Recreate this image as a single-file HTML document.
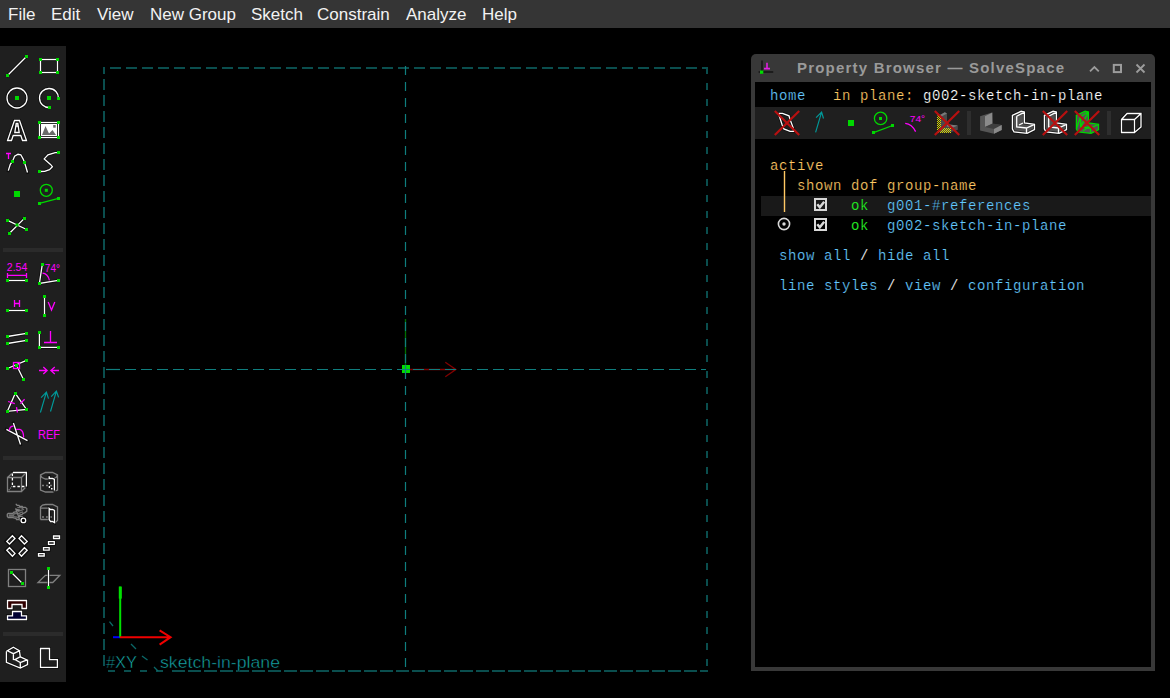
<!DOCTYPE html>
<html><head><meta charset="utf-8">
<style>
html,body{margin:0;padding:0;background:#000;width:1170px;height:698px;overflow:hidden;position:relative;font-family:"Liberation Sans",sans-serif;}
#menubar{position:absolute;left:0;top:0;width:1170px;height:28px;background:#353535;}
#menubar span{position:absolute;top:5px;font-size:17px;line-height:20px;color:#f2f2f2;white-space:nowrap;}
#win{position:absolute;left:751px;top:54px;width:404px;height:617px;background:#383838;border-radius:5px 5px 0 0;}
#title{position:absolute;left:797px;top:58px;font-weight:bold;font-size:15px;letter-spacing:1.2px;color:#9a9a9a;white-space:nowrap;line-height:20px;}
#tw{position:absolute;left:755px;top:82px;width:396px;height:585px;background:#000;}
#strip{position:absolute;left:755px;top:107px;width:396px;height:32px;background:#1f1f1f;}
#hl{position:absolute;left:761px;top:196px;width:390px;height:20px;background:#191919;}
.t{position:absolute;font-family:"Liberation Mono",monospace;font-size:14px;letter-spacing:0.6px;line-height:20px;white-space:pre;-webkit-text-stroke:0.2px #000;}
</style></head><body>
<div id="menubar">
<span style="left:8px">File</span>
<span style="left:51px">Edit</span>
<span style="left:97px">View</span>
<span style="left:150px">New Group</span>
<span style="left:251px">Sketch</span>
<span style="left:317px">Constrain</span>
<span style="left:406px">Analyze</span>
<span style="left:482px">Help</span>
</div>
<svg id="tbsvg" width="66" height="698" style="position:absolute;left:0;top:0">
<defs>
<style>
.h{fill:none;stroke:#000;stroke-width:3;stroke-linecap:square;opacity:.55}
.w{fill:none;stroke:#fff;stroke-width:1.3}
.m{fill:none;stroke:#ff00ff;stroke-width:1.3}
.gy{fill:none;stroke:#808080;stroke-width:1.3}
.tl{fill:none;stroke:#009a9a;stroke-width:1.15}
.gl{fill:none;stroke:#00d800;stroke-width:1.3}
.p{fill:#00d800}
</style>
</defs>
<rect x="0" y="46" width="66" height="636" fill="#1f1f1f"/>
<rect x="3" y="248" width="60" height="4" fill="#2b2b2b"/>
<rect x="3" y="456" width="60" height="4" fill="#2b2b2b"/>
<rect x="3" y="632" width="60" height="4" fill="#2b2b2b"/>

<!-- row1: line, rect -->
<g transform="translate(5,54)">
 <path class="h" d="M2.5 21.5L21.5 2.5"/><path class="w" d="M2.5 21.5L21.5 2.5"/>
 <rect class="p" x="1" y="20" width="3" height="3"/><rect class="p" x="20" y="1" width="3" height="3"/>
</g>
<g transform="translate(37,54)">
 <rect class="h" x="3.5" y="5.5" width="17" height="13"/><rect class="w" x="3.5" y="5.5" width="17" height="13"/>
 <rect class="p" x="2" y="4" width="3" height="3"/><rect class="p" x="19" y="4" width="3" height="3"/>
 <rect class="p" x="2" y="17" width="3" height="3"/><rect class="p" x="19" y="17" width="3" height="3"/>
</g>
<!-- row2: circle, arc -->
<g transform="translate(5,86)">
 <circle class="h" cx="12" cy="12" r="10"/><circle class="w" cx="12" cy="12" r="10"/>
 <rect class="p" x="10" y="10" width="4" height="4"/>
</g>
<g transform="translate(37,86)">
 <path class="h" d="M21.5 12.5A9.5 9.5 0 1 0 12.5 21.5"/><path class="w" d="M21.5 12.5A9.5 9.5 0 1 0 12.5 21.5"/>
 <rect class="p" x="10" y="10" width="4" height="4"/>
 <rect class="p" x="20" y="11" width="3" height="3"/><rect class="p" x="11" y="20" width="3" height="3"/>
</g>
<!-- row3: text A, image -->
<g transform="translate(5,118)">
 <path class="h" d="M9.5 2.5H14.5L21.5 22.5H17.5L15.8 17.5H8.2L6.5 22.5H2.5Z M9.8 14.5H14.2L12.8 5.5H11.2Z"/>
 <path class="w" d="M9.5 2.5H14.5L21.5 22.5H17.5L15.8 17.5H8.2L6.5 22.5H2.5Z M9.8 14.5H14.2L12.8 5.5H11.2Z"/>
 <rect fill="#fff" x="11.3" y="6.3" width="1.4" height="2.8"/>
</g>
<g transform="translate(37,118)">
 <rect x="1" y="3" width="22" height="18" fill="#000" opacity=".6"/>
 <rect class="w" x="2.5" y="4.5" width="19" height="15"/>
 <rect x="4" y="6" width="16" height="12" fill="#fff"/>
 <path d="M5 17L8.5 8L12 15.5L15.5 12L19 17Z" fill="#6a6a6a"/>
 <rect x="16.2" y="7" width="2.5" height="2.7" fill="#6a6a6a"/>
 <rect class="p" x="1" y="3" width="3" height="3"/><rect class="p" x="20" y="3" width="3" height="3"/>
 <rect class="p" x="1" y="18" width="3" height="3"/><rect class="p" x="20" y="18" width="3" height="3"/>
</g>
<!-- row4: tangent arc, bezier -->
<g transform="translate(5,150)">
 <path class="m" d="M1 3.5H6M3.5 3.5V9"/>
 <path class="h" d="M3.3 20.6L5.3 14.4L7.4 11.5L9.6 6.2L13 4.3L15.8 4.8L18.2 9.1L19.5 12.4L21 17.2L22.5 22.5"/>
 <path class="w" d="M3.3 20.6L5.3 14.4L7.4 11.5L9.6 6.2L13 4.3L15.8 4.8L18.2 9.1L19.5 12.4L21 17.2L22.5 22.5"/>
 <rect class="p" x="6" y="10" width="3" height="3"/><rect class="p" x="18" y="11" width="3" height="3"/>
</g>
<g transform="translate(37,150)">
 <path class="h" d="M2.4 21.5L7.7 21.3L12.5 19.6L15.4 16.7L13.5 14.4L7.2 8.9L11 4.8L18.2 2.6L21.3 2.6"/>
 <path class="w" d="M2.4 21.5L7.7 21.3L12.5 19.6L15.4 16.7L13.5 14.4L7.2 8.9L11 4.8L18.2 2.6L21.3 2.6"/>
 <rect class="p" x="1" y="20" width="3" height="3"/><rect class="p" x="20" y="1" width="3" height="3"/>
</g>
<!-- row5: point, workplane construction -->
<g transform="translate(5,182)">
 <rect class="p" x="9" y="9" width="6" height="6"/>
</g>
<g transform="translate(37,182)">
 <circle class="gl" cx="9.3" cy="8.3" r="6"/>
 <rect class="p" x="7.8" y="6.8" width="3" height="3"/>
 <path class="gl" d="M2.4 21.4L21.5 16.4"/>
 <rect class="p" x="1" y="20" width="3" height="3"/><rect class="p" x="20" y="15" width="3" height="3"/>
</g>
<!-- row6: split -->
<g transform="translate(5,214)">
 <path class="h" d="M2.5 6.4L21.6 15.5M19.4 4.4L4.3 19.5"/>
 <path class="w" d="M2.5 6.4L21.6 15.5M19.4 4.4L4.3 19.5"/>
 <rect class="p" x="1" y="5" width="3" height="3"/><rect class="p" x="18" y="3" width="3" height="3"/>
 <rect class="p" x="20" y="14" width="3" height="3"/><rect class="p" x="3" y="18" width="3" height="3"/>
 <rect class="p" x="10.5" y="9.5" width="3" height="3"/>
</g>
<!-- row7: distance, angle -->
<g transform="translate(5,262)">
 <text x="1.8" y="9.2" font-family="Liberation Sans" font-size="10" fill="#ff00ff" textLength="20.5" lengthAdjust="spacingAndGlyphs">2.54</text>
 <path class="m" d="M2.5 11V16M21.5 11V16M2.5 13.4H21.5"/>
 <path class="h" d="M2.5 18.5H21.5"/><path class="w" d="M2.5 18.5H21.5"/>
 <rect class="p" x="1" y="17" width="3" height="3"/><rect class="p" x="20" y="17" width="3" height="3"/>
</g>
<g transform="translate(37,262)">
 <text x="7.8" y="10" font-family="Liberation Sans" font-size="10" fill="#ff00ff" textLength="15.2" lengthAdjust="spacingAndGlyphs">74°</text>
 <path class="m" d="M5.3 11.2Q11 11.5 12.5 18.7"/>
 <path class="h" d="M5.3 2.4L2.4 21.5L21.3 18.4"/><path class="w" d="M5.3 2.4L2.4 21.5L21.3 18.4"/>
 <rect class="p" x="4" y="1" width="3" height="3"/><rect class="p" x="1" y="20" width="3" height="3"/><rect class="p" x="20" y="17" width="3" height="3"/>
</g>
<!-- row8: H, V -->
<g transform="translate(5,294)">
 <path class="m" d="M9.5 6V13M14.5 6V13M9.5 9.5H14.5"/>
 <path class="h" d="M2.5 16.5H21.5"/><path class="w" d="M2.5 16.5H21.5"/>
 <rect class="p" x="1" y="15" width="3" height="3"/><rect class="p" x="20" y="15" width="3" height="3"/>
</g>
<g transform="translate(37,294)">
 <path class="m" d="M11.2 8L14.5 16L17.8 8"/>
 <path class="h" d="M7.5 2.4V21.5"/><path class="w" d="M7.5 2.4V21.5"/>
 <rect class="p" x="6" y="1" width="3" height="3"/><rect class="p" x="6" y="20" width="3" height="3"/>
</g>
<!-- row9: parallel, perpendicular -->
<g transform="translate(5,326)">
 <path class="h" d="M2.4 10.5L21.5 7.4M2.4 17.5L21.5 14.4"/><path class="w" d="M2.4 10.5L21.5 7.4M2.4 17.5L21.5 14.4"/>
 <rect class="p" x="1" y="9" width="3" height="3"/><rect class="p" x="20" y="6" width="3" height="3"/>
 <rect class="p" x="1" y="16" width="3" height="3"/><rect class="p" x="20" y="13" width="3" height="3"/>
</g>
<g transform="translate(37,326)">
 <path class="m" d="M13.5 5V16.5M7 16.5H20"/>
 <path class="h" d="M2.4 6.5V21.4H21.3"/><path class="w" d="M2.4 6.5V21.4H21.3"/>
 <rect class="p" x="1" y="5" width="3" height="3"/><rect class="p" x="1" y="20" width="3" height="3"/><rect class="p" x="20" y="20" width="3" height="3"/>
</g>
<!-- row10: point on line, coincident arrows -->
<g transform="translate(5,358)">
 <path class="h" d="M2.4 10.5L21.5 2.4M11.5 7.2L18.4 21.3"/><path class="w" d="M2.4 10.5L21.5 2.4M11.5 7.2L18.4 21.3"/>
 <rect class="m" x="8.5" y="4.5" width="6" height="6"/>
 <rect class="p" x="1" y="9" width="3" height="3"/><rect class="p" x="20" y="1" width="3" height="3"/>
 <rect class="p" x="10" y="6" width="3" height="3"/><rect class="p" x="17" y="20" width="3" height="3"/>
</g>
<g transform="translate(37,358)">
 <path class="m" d="M2 12.5H10.1M6.3 9.1L10.1 12.5L6.3 15.9M22 12.5H13.9M17.8 9.1L13.9 12.5L17.8 15.9"/>
</g>
<!-- row11: equal triangle, parallel arrows (same orientation) -->
<g transform="translate(5,390)">
 <path class="h" d="M10.3 3.3L2.4 21.3L21.5 19.4Z"/><path class="w" d="M10.3 3.3L2.4 21.3L21.5 19.4Z"/>
 <path class="m" d="M3.1 11.5L9.8 13.6M15.3 13.6L19.6 9.3M11.5 17.2L12.4 22.5"/>
 <rect class="p" x="9" y="2" width="3" height="3"/><rect class="p" x="1" y="20" width="3" height="3"/><rect class="p" x="20" y="18" width="3" height="3"/>
</g>
<g transform="translate(37,390)">
 <path class="tl" d="M3.4 22.5L9.4 2.2M4.1 7.7L9.4 2.2L11.5 8.6M13.5 21.5L19.4 1.2M14.2 6.7L19.4 1.2L21.6 7.4"/>
</g>
<!-- row12: angle cross, REF -->
<g transform="translate(5,422)">
 <path class="h" d="M1.4 7.4L22.5 18.6M8.4 1L15.5 22.5"/><path class="w" d="M1.4 7.4L22.5 18.6M8.4 1L15.5 22.5"/>
 <path class="m" d="M4.5 8.6Q4.3 4.1 8.6 4.1M11 7.4H14.8Q18.6 8.5 18.6 15.5"/>
</g>
<g transform="translate(37,422)">
 <text x="1" y="16.7" font-family="Liberation Sans" font-size="12" fill="#ff00ff" textLength="22" lengthAdjust="spacingAndGlyphs">REF</text>
</g>
<!-- row13: extrude, lathe -->
<g transform="translate(5,470)">
 <path class="gy" d="M2.5 7.5H16.5V21.5H2.5Z M2.5 7.5L7.9 2.5M16.5 7.5L21.4 2.5M16.5 21.5L21.4 16.5"/>
 <path class="gy" stroke-dasharray="1 1" d="M2.5 21.5L7.4 16"/>
 <path class="h" d="M7.9 2.5H21.4V16.5"/><path class="w" d="M7.9 2.5H21.4V16.5"/>
 <path class="w" stroke-dasharray="2.5 2" d="M7.4 3.5V16.5H21"/>
</g>
<g transform="translate(37,470)">
 <path class="gy" d="M8.5 2.5H15.5L20.5 5V20L15.5 22H8.5L3.5 20V5Z M3.5 5L5 7.5L8.5 9H15.5L19 7.5L20.5 5"/>
 <path class="gy" stroke-dasharray="2 2" d="M5 15.5H16"/>
 <path class="h" d="M12.2 6.2V8.3H15.5L17.4 9.3V20.6"/><path class="w" d="M12.2 6.2V8.3H15.5L17.4 9.3V20.6"/>
 <path class="w" stroke-dasharray="2 2" d="M12.4 12V18"/>
 <rect fill="#fff" x="14" y="18" width="1.5" height="1.5"/>
</g>
<!-- row14: helix, revolve -->
<g transform="translate(5,502)">
 <path class="gy" stroke-width="1.1" d="M10.6 2.3H11.5L12 3.4H14L14.6 4.3H17.2L17.8 5.3H20.3L21.8 6.6V9.2L20 10.6L18 11.5L17.2 12.3L14.6 13.2L14.9 14.3H17.2L18 15.5 M15 18.3L14 17.5H11.5L10.9 16.3L8.6 15.8L8 15.5H3.2L2.3 14.3V12.3L3.2 11.3H8L8.6 10.3L11.5 9.7L12 8.6H14L14.3 7.9L11.5 7.4L10.6 6.6Z"/>
 <path class="gy" stroke-width="1" opacity=".8" d="M12.3 5.7H16.6L18.3 7.4L16 8.3L12.9 9.5 M3.7 12.9H8.6L9.5 11.7L14 11.5L15.5 10.6L18 10 M3.7 14H8.6L9.2 14.6L12 15.2L14 15.8"/>
 <circle class="h" cx="18.4" cy="18.4" r="2.3"/><circle fill="#000" cx="18.4" cy="18.4" r="2"/><circle class="w" cx="18.4" cy="18.4" r="2.3" stroke-width="1.6"/>
</g>
<g transform="translate(37,502)">
 <path class="gy" d="M3.5 17.5V5L5.5 3L8.5 2.5H15.5L20.5 5V18.5L17.5 21M3.5 17.5H12.2M3.5 6.2H12.2"/>
 <path class="gy" stroke-dasharray="2 2" d="M5 15H16"/>
 <path class="h" d="M12.2 6.4L13.5 7.5H15.5L17.5 8.5V20.6L15.5 19.5H13.5L12.2 17.5Z"/>
 <path class="w" d="M12.2 6.4L13.5 7.5H15.5L17.5 8.5V20.6L15.5 19.5H13.5L12.2 17.5Z"/>
</g>
<!-- row15: step rotate, step translate -->
<g transform="translate(5,534)">
 <path class="h" d="M1 7.4L7.4 1L10.8 4.5L4.5 10.8Z M13.2 4.5L16.5 1L23 7.4L19.4 10.8Z M1 16.3L4.5 12.9L10.8 19.4L7.4 23Z M13.2 19.4L19.4 12.9L23 16.3L16.5 23Z"/>
 <path class="w" stroke-width="1.5" d="M1.8 7.4L7.4 1.8L10 4.5L4.5 10Z M14 4.5L16.5 1.8L22.2 7.4L19.4 10Z M1.8 16.3L4.5 13.7L10 19.4L7.4 22.2Z M14 19.4L19.4 13.7L22.2 16.3L16.5 22.2Z"/>
</g>
<g transform="translate(37,534)">
 <path class="h" d="M16.5 2H22.5V4.5H16.5Z M11.5 7.7H17.3V10.3H11.5Z M6.5 13.7H12.2V16.2H6.5Z M1.5 19.6H7.2V22H1.5Z"/>
 <path class="w" stroke-width="1.5" d="M16.5 2H22.5V4.5H16.5Z M11.5 7.7H17.3V10.3H11.5Z M6.5 13.7H12.2V16.2H6.5Z M1.5 19.6H7.2V22H1.5Z"/>
</g>
<!-- row16: workplane, normal through workplane -->
<g transform="translate(5,566)">
 <rect class="gy" x="3.5" y="3.5" width="17" height="17"/>
 <path class="h" d="M6.5 6.5L17.5 17.5"/><path class="w" d="M6.5 6.5L17.5 17.5"/>
 <rect class="p" x="5" y="5" width="3" height="3"/><rect class="p" x="16" y="16" width="3" height="3"/>
</g>
<g transform="translate(37,566)">
 <path class="gy" d="M1 16.5H15.8L22.8 9.3H8.4Z"/>
 <path class="h" d="M11.5 2.4V21.5"/><path class="w" d="M11.5 2.4V21.5"/>
 <rect class="p" x="10" y="1" width="3" height="3"/><rect class="p" x="10" y="20" width="3" height="3"/>
</g>
<!-- row17: assemble -->
<g transform="translate(5,598)">
 <path d="M2.5 2.5H21.5V10.5H17V6.5H7V10.5H2.5Z" fill="#300000" stroke="#000" stroke-width="3" opacity=".6"/>
 <path d="M2.5 2.5H21.5V10.5H17V6.5H7V10.5H2.5Z" fill="#300000" stroke="#fff" stroke-width="1.3"/>
 <path d="M7.5 13.5H16.5V17.8H21.5V21.5H2.5V17.8H7.5Z" fill="#000" stroke="#000" stroke-width="3" opacity=".6"/>
 <path d="M7.5 13.5H16.5V17.8H21.5V21.5H2.5V17.8H7.5Z" fill="#000033" stroke="#fff" stroke-width="1.3"/>
</g>
<!-- row18: solid model L, sketch L -->
<g transform="translate(5,646)">
 <path class="h" d="M8.4 1.2L14.4 4.8L15.3 10.8L22 13.9V18.7L15.3 22L1.4 16.3V5.3Z"/>
 <path class="w" d="M8.4 1.2L14.4 4.8L8.4 7.7L2.4 4.8Z M1.4 5.3V16.3L15.3 22L22.5 18.7V13.9 M15.3 10.8L22 13.9L15.3 16.5L10 13.6Z M8.4 7.7V13.4L10 13.6 M14.4 4.8L15.3 10.8 M15.3 16.5V22"/>
</g>
<g transform="translate(37,646)">
 <path class="h" d="M3.5 2.5H12.5V13.6H20.4V21.3H3.5Z"/><path class="w" d="M3.5 2.5H12.5V13.6H20.4V21.3H3.5Z"/>
</g>
</svg>
<svg id="cv" width="1170" height="698" style="position:absolute;left:0;top:0">
 <!-- workplane border -->
 <g fill="none" stroke="#0a4e4e" stroke-width="2">
  <path d="M110 68H708" stroke-dasharray="11 5"/>
  <path d="M104 67V74"/><path d="M104 79V671" stroke-dasharray="11 5"/>
  <path d="M707 67V671" stroke-dasharray="7 9"/>
  <path d="M108 671H172" stroke-dasharray="7 9"/><path d="M172 671H708" stroke-dasharray="13 3"/>
 </g>
 <!-- under-lines: green normal & red axis -->
 <path d="M405.5 319V365" stroke="#007000" stroke-width="1.3"/>
 <path d="M410 369.5H455.5M445.3 362.2L455.8 369.5L445.3 376.8" fill="none" stroke="#800000" stroke-width="1.4"/>
 <!-- center dashed cross -->
 <g fill="none" stroke="#0f7e7e" stroke-width="1.2">
  <path d="M106 369.5H120"/><path d="M125 369.5H706" stroke-dasharray="11 5"/>
  <path d="M405.5 66V671" stroke-dasharray="9 7"/>
 </g>
 <rect x="402" y="365" width="8" height="8" fill="#00dd00"/>
 <path d="M405.5 365V373M402 369.5H410" stroke="#0f7e7e" stroke-width="1.2"/>
 <!-- axes -->
 <path d="M113 637.2H120" stroke="#0000ff" stroke-width="2"/>
 <path d="M120.2 586.6V637.5" stroke="#00e000" stroke-width="2"/>
 <rect x="118.8" y="586.6" width="3" height="12" fill="#00e000"/>
 <path d="M120 637.2H170M159.6 630.3L170.6 637.2L159.6 644.7" fill="none" stroke="#f00000" stroke-width="2"/>
 <!-- ticks -->
 <path d="M109.5 621.7L113 626M131 644L136 649M142 656L147.5 660M154 667L158 671" stroke="#0a6868" stroke-width="1.3"/>
 <text x="106" y="667.7" font-family="Liberation Sans" font-size="16" fill="#16acac" stroke="#000" stroke-width="0.45" textLength="31" lengthAdjust="spacingAndGlyphs">#XY</text>
 <text x="160" y="667.7" font-family="Liberation Sans" font-size="16" fill="#16acac" stroke="#000" stroke-width="0.45" textLength="120" lengthAdjust="spacingAndGlyphs">sketch-in-plane</text>
</svg>
<div id="win"></div>
<div id="title">Property Browser — SolveSpace</div>
<div id="tw"></div>
<div id="strip"></div>
<div id="hl"></div>
<div class="t" style="left:770px;top:86px;color:#64c8ff">home</div>
<div class="t" style="left:833px;top:86px;color:#ffc864">in plane:</div>
<div class="t" style="left:923px;top:86px;color:#ffffff">g002-sketch-in-plane</div>
<div class="t" style="left:770px;top:156px;color:#ffc864">active</div>
<div class="t" style="left:797px;top:176px;color:#ffc864">shown dof group-name</div>
<div class="t" style="left:851px;top:196px;color:#28ff28">ok</div>
<div class="t" style="left:887px;top:196px;color:#64c8ff">g001-#references</div>
<div class="t" style="left:851px;top:216px;color:#28ff28">ok</div>
<div class="t" style="left:887px;top:216px;color:#64c8ff">g002-sketch-in-plane</div>
<div class="t" style="left:779px;top:246px;color:#64c8ff">show all <span style="color:#fff">/</span> hide all</div>
<div class="t" style="left:779px;top:276px;color:#64c8ff">line styles <span style="color:#fff">/</span> view <span style="color:#fff">/</span> configuration</div>
<svg id="pbsvg" width="1170" height="698" style="position:absolute;left:0;top:0">
 <defs><pattern id="stip" width="2" height="2" patternUnits="userSpaceOnUse"><rect width="1" height="1" fill="#d8d800"/><rect x="1" y="1" width="1" height="1" fill="#d8d800"/></pattern><style>
 .h{fill:none;stroke:#000;stroke-width:3;stroke-linecap:square;opacity:.55}
 .w{fill:none;stroke:#fff;stroke-width:1.3}
 .m{fill:none;stroke:#ff00ff;stroke-width:1.3}
 .tl{fill:none;stroke:#009a9a;stroke-width:1.15}
 .gl{fill:none;stroke:#00d800;stroke-width:1.3}
 .p{fill:#00d800}
 .x{fill:none;stroke:#b81010;stroke-width:2.2}
 </style></defs>
 <!-- title bar icon -->
 <path d="M762 60.5V74M758.6 72H773.2" stroke="#1c1c1c" stroke-width="2"/>
 <rect x="760" y="70.5" width="3.3" height="3.3" fill="#00e000"/>
 <path d="M767 62.8V68.5M764 68.6H770" stroke="#e020e0" stroke-width="1.6"/>
 <!-- title buttons -->
 <path d="M1090 71.4L1094.4 67L1098.8 71.4" fill="none" stroke="#9c9c9c" stroke-width="1.8"/>
 <rect x="1113.8" y="64.9" width="7.2" height="7.2" fill="none" stroke="#9c9c9c" stroke-width="2"/>
 <path d="M1136.5 64.5L1144.5 72.5M1144.5 64.5L1136.5 72.5" stroke="#9c9c9c" stroke-width="1.8"/>
 <!-- orange active line -->
 <path d="M784.5 171V212" stroke="#ffc864" stroke-width="1.4"/>
 <!-- checkboxes -->
 <g fill="none" stroke="#d8d8d8">
  <rect x="815" y="199" width="11" height="11" stroke-width="2"/>
  <path d="M817.3 204.3L819.8 207.3L824.2 201.8" stroke-width="2.5"/>
  <rect x="815" y="219" width="11" height="11" stroke-width="2"/>
  <path d="M817.3 224.3L819.8 227.3L824.2 221.8" stroke-width="2.5"/>
  <circle cx="784" cy="224" r="5.6" stroke-width="1.6"/>
 </g>
 <circle cx="784" cy="224" r="1.7" fill="#d8d8d8"/>
 <!-- toolbar strip icons -->
 <g transform="translate(775,111)">
  <path class="h" d="M4.2 2.3H7.5L14 4.8L14.9 8L18.2 16.8L18.7 20.3H15.1L8.9 17.9L7.2 14L4.2 4.8Z"/>
  <path class="w" d="M4.2 2.3H7.5L14 4.8L14.9 8L18.2 16.8L18.7 20.3H15.1L8.9 17.9L7.2 14L4.2 4.8Z"/>
  <path class="x" d="M-0.2 0L24.2 24M24.2 0L-0.2 24"/>
 </g>
 <g transform="translate(807,111)">
  <path class="tl" d="M8.6 21.4L14.6 1.2M9.1 6.7L14.6 1.2L16.5 7.5"/>
 </g>
 <g transform="translate(839,111)">
  <rect class="p" x="9" y="9" width="6" height="6"/>
 </g>
 <g transform="translate(871,111)">
  <circle class="gl" cx="9.6" cy="7.4" r="6.2"/>
  <rect class="p" x="8" y="6" width="3" height="3"/>
  <path class="gl" d="M2.5 21.6L21.6 14.5"/>
  <rect class="p" x="1" y="20" width="3" height="3"/><rect class="p" x="20" y="13" width="3" height="3"/>
 </g>
 <g transform="translate(903,111)">
  <text x="6.8" y="11" font-family="Liberation Sans" font-size="9.2" fill="#ff00ff" textLength="15.4" lengthAdjust="spacingAndGlyphs">74°</text>
  <path class="m" d="M2.2 12.3Q9 13 12.6 20.6"/>
 </g>
 <g transform="translate(935,111)">
  <path d="M4.9 4L9.8 1.2L12 2.5V13.2L22.8 14.5V18.8L16 21.2L4.9 21.8Z" fill="#4a4a4a"/>
  <path d="M4.9 4L9.8 1.2L12 2.5L7 5.2Z M12 13.2L22.8 14.5L18 16.5L12 15.5Z" fill="#7a7a7a"/>
  <path d="M2 4.6H6V16.9H16V22H2Z" fill="url(#stip)"/>
  <path class="x" d="M-0.2 0L24.2 24M24.2 0L-0.2 24"/>
 </g>
 <rect x="967" y="111" width="4" height="24" fill="#2e2e2e"/>
 <g transform="translate(979,111)">
  <path d="M1.1 5.2L12.9 1.6L13.4 13L22.7 14V18.9L15 22.7L1.1 19.4Z" fill="#555"/>
  <path d="M6 5.2L13.4 1.6V13.1L6 16.1Z" fill="#8a8a8a"/>
  <path d="M6 16.1L13.4 12.6L22.7 14L15 18Z" fill="#3e3e3e"/>
  <path d="M15 18L22.7 14V18.9L15 22.7Z" fill="#8a8a8a"/>
 </g>
 <g transform="translate(1011,111)">
  <path d="M1.4 4.4L10.1 0.3L13.4 1.1V12L23.5 13.4V18.6L16.1 22.4L3 20.8L1.4 18Z" fill="#505050"/>
  <path class="h" d="M1.4 4.4L10.1 0.3L13.4 1.1V12L23.5 13.4V18.6L16.1 22.4L3 20.8L1.4 18Z"/>
  <path class="w" d="M1.4 4.4L10.1 0.3L13.4 1.1V12L23.5 13.4V18.6L16.1 22.4L3 20.8L1.4 18Z M5.7 5.2L13.4 1.1 M5.7 5.2V15.9L15.5 17L23.5 13.4 M15.5 17V22.4 M8 14L12 12"/>
 </g>
 <g transform="translate(1043,111)">
  <path d="M1.4 4.4L10.1 0.3L13.4 1.1V12L23.5 13.4V18.6L16.1 22.4L3 20.8L1.4 18Z" fill="#505050"/>
  <path class="h" d="M1.4 4.4L10.1 0.3L13.4 1.1V12L23.5 13.4V18.6L16.1 22.4L3 20.8L1.4 18Z"/>
  <path class="w" stroke-width="1.8" d="M1.4 4.4L10.1 0.3L13.4 1.1V12L23.5 13.4V18.6L16.1 22.4L3 20.8L1.4 18Z M5.7 5.2L13.4 1.1 M5.7 5.2V15.9L15.5 17L23.5 13.4 M15.5 17V22.4"/>
  <path class="x" d="M-0.2 0L24.2 24M24.2 0L-0.2 24"/>
 </g>
 <g transform="translate(1075,111)">
  <path d="M1.4 4.4L10.1 0.3L13.4 1.1V12L23.5 13.4V18.6L16.1 22.4L3 20.8L1.4 18Z" fill="#5a4a5a"/>
  <path class="gl" stroke="#00e000" d="M1.4 4.4L10.1 0.3L13.4 1.1V12L23.5 13.4V18.6L16.1 22.4L3 20.8L1.4 18Z M5.7 5.2L13.4 1.1 M5.7 5.2V15.9L15.5 17L23.5 13.4 M15.5 17V22.4 M5.7 15.9L13.4 1.1 M1.4 18L5.7 5.2 M8 20L16 14"/>
  <path class="x" d="M-0.2 0L24.2 24M24.2 0L-0.2 24"/>
 </g>
 <rect x="1107" y="111" width="4" height="24" fill="#2e2e2e"/>
 <g transform="translate(1119,111)">
  <path class="h" d="M2.5 8.5H15.5V21.5H2.5Z M2.5 8.5L8.1 2.5H22V16L15.5 21.5 M15.5 8.5L22 2.5"/>
  <path class="w" stroke-width="1.5" d="M2.5 8.5H15.5V21.5H2.5Z M2.5 8.5L8.1 2.5H22V16L15.5 21.5 M15.5 8.5L22 2.5"/>
 </g>
</svg>
</body></html>
